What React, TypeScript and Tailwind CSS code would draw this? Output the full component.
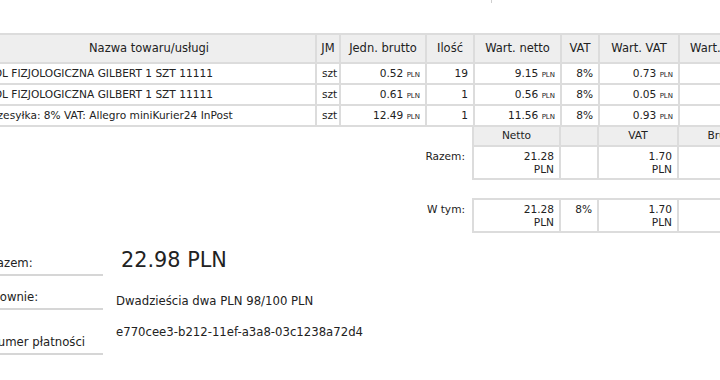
import React from "react";

const items = [
  { name: "SÓL FIZJOLOGICZNA GILBERT 1 SZT 11111", jm: "szt", unit: "0.52", qty: "19", net: "9.15", vat: "8%", vatVal: "0.73", gross: "9.88" },
  { name: "SÓL FIZJOLOGICZNA GILBERT 1 SZT 11111", jm: "szt", unit: "0.61", qty: "1", net: "0.56", vat: "8%", vatVal: "0.05", gross: "0.61" },
  { name: "Przesyłka: 8% VAT: Allegro miniKurier24 InPost", jm: "szt", unit: "12.49", qty: "1", net: "11.56", vat: "8%", vatVal: "0.93", gross: "12.49" },
];

function Money({ v }: { v: string }) {
  return (
    <>
      {v} <span className="text-[7px]">PLN</span>
    </>
  );
}

function Cols() {
  return (
    <colgroup>
      <col className="w-[334px]" />
      <col className="w-[24px]" />
      <col className="w-[86px]" />
      <col className="w-[48px]" />
      <col className="w-[87px]" />
      <col className="w-[38px]" />
      <col className="w-[80px]" />
      <col className="w-[92px]" />
    </colgroup>
  );
}

const th = "border-2 border-[#dcdcdc] bg-[#eeeeee] font-normal text-[11.5px] h-[29px] px-1";
const cell = "border-2 border-[#dcdcdc] text-[10.6px] h-[21px] px-[5px]";
const td = cell + " text-right";
const sum = "border-2 border-[#dcdcdc] text-[10.6px] leading-[13px] px-[5px] pt-[3px] pb-[2px] text-right align-top";
const sumHead = "border-2 border-[#dcdcdc] bg-[#eeeeee] text-[10.6px] text-center h-[20px]";

export default function App() {
  return (
    <div className="w-[720px] h-[380px] overflow-hidden bg-white text-[#222]" style={{ fontFamily: '"DejaVu Sans", Verdana, sans-serif' }}>
      <div className="ml-[-19px] w-[820px]">
        <div className="h-[33px]">
          <div className="ml-[510px] w-px h-[3px] bg-[#cfcfcf]" />
        </div>

        <table className="table-fixed border-collapse w-[789px]">
          <Cols />
          <thead>
            <tr>
              <th className={th}>Nazwa towaru/usługi</th>
              <th className={th + " px-0"}>JM</th>
              <th className={th}>Jedn. brutto</th>
              <th className={th}>Ilość</th>
              <th className={th}>Wart. netto</th>
              <th className={th}>VAT</th>
              <th className={th}>Wart. VAT</th>
              <th className="border-2 border-[#dcdcdc] bg-[#eeeeee] font-normal text-[11.5px] h-[29px] pl-[10px] text-left whitespace-nowrap overflow-hidden">Wart. brutto</th>
            </tr>
          </thead>
          <tbody>
            {items.map((it, i) => (
              <tr key={i}>
                <td className={cell + " text-left whitespace-nowrap overflow-hidden pl-[4px]"}>{it.name}</td>
                <td className={cell + " text-left px-[3px]"}>{it.jm}</td>
                <td className={td}><Money v={it.unit} /></td>
                <td className={td}>{it.qty}</td>
                <td className={td}><Money v={it.net} /></td>
                <td className={td}>{it.vat}</td>
                <td className={td}><Money v={it.vatVal} /></td>
                <td className="border-2 border-[#dcdcdc] text-[10.6px] h-[21px] pl-[48px] text-left whitespace-nowrap overflow-hidden"><Money v={it.gross} /></td>
              </tr>
            ))}
          </tbody>
        </table>

        <table className="table-fixed border-collapse w-[789px] mt-[-2px]">
          <Cols />
          <tbody>
            <tr>
              <td colSpan={4} />
              <td className={sumHead}>Netto</td>
              <td className={sumHead} />
              <td className={sumHead}>VAT</td>
              <td className={sumHead}>Brutto</td>
            </tr>
            <tr>
              <td colSpan={4} className="text-[10.6px] text-right align-top pt-[3px] pr-[7px]">Razem:</td>
              <td className={sum + " h-[31px]"}>21.28<br />PLN</td>
              <td className={sum} />
              <td className={sum}>1.70<br />PLN</td>
              <td className={sum}>22.98<br />PLN</td>
            </tr>
          </tbody>
        </table>

        <table className="table-fixed border-collapse w-[789px] mt-[18px]">
          <Cols />
          <tbody>
            <tr>
              <td colSpan={4} className="text-[10.6px] text-right align-top pt-[3px] pr-[7px]">W tym:</td>
              <td className={sum + " h-[32px]"}>21.28<br />PLN</td>
              <td className={sum}>8%</td>
              <td className={sum}>1.70<br />PLN</td>
              <td className={sum}>22.98<br />PLN</td>
            </tr>
          </tbody>
        </table>

        <div className="mt-[15px] ml-[8px] grid grid-cols-[114px_1fr] gap-x-[13px] text-[11.7px]">
          <div className="h-[28px] flex items-end border-b-2 border-[#d6d6d6] pb-[1px]">Razem:</div>
          <div className="text-[20.8px] leading-[24px] pl-[5px]">22.98 PLN</div>

          <div className="h-[34px] flex items-end border-b-2 border-[#d6d6d6] pb-[1px]">Słownie:</div>
          <div className="pt-[17px]">Dwadzieścia dwa PLN 98/100 PLN</div>

          <div className="h-[44px] flex items-end border-b-2 border-[#d6d6d6] pb-[1px]">Numer płatności</div>
          <div className="pt-[13px]">e770cee3-b212-11ef-a3a8-03c1238a72d4</div>
        </div>
      </div>
    </div>
  );
}
